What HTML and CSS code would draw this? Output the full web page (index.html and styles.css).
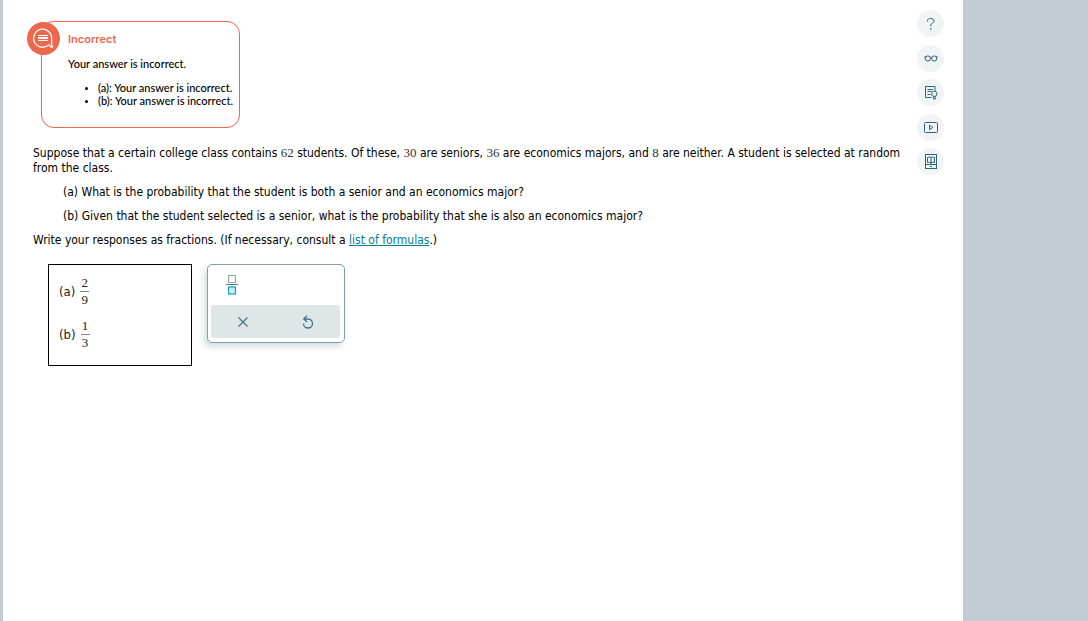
FILE: index.html
```html
<!DOCTYPE html>
<html lang="en">
<head>
<meta charset="utf-8">
<title>Probability question</title>
<link rel="stylesheet" href="styles.css">
</head>
<body>
<div class="page">
  <main class="content">
    <section class="feedback">
      <span class="feedback-badge">
        <svg width="33" height="33" viewBox="0 0 33 33" fill="none" stroke="#fff" stroke-width="1.3" stroke-linejoin="round" stroke-linecap="round"><path d="M22 22.600A9 9 0 1 1 24.600 17V22.500l1 2.500c-1.600.5-3-.7-3.600-2.400Z"/><path d="M11.500 13.500h9M11.500 15.500h9M11.500 16.500h9M11.500 18.500h9" stroke-width="1"/></svg>
      </span>
      <h1 class="feedback-title">Incorrect</h1>
      <p class="feedback-text">Your answer is incorrect.</p>
      <ul class="feedback-list">
        <li>(a): Your answer is incorrect.</li>
        <li>(b): Your answer is incorrect.</li>
      </ul>
    </section>
    <section class="question">
      <p>Suppose that a certain college class contains <span class="num">62</span> students. Of these, <span class="num">30</span> are seniors, <span class="num">36</span> are economics majors, and <span class="num">8</span> are neither. A student is selected at random from the class.</p>
      <p class="part">(a) What is the probability that the student is both a senior and an economics major?</p>
      <p class="part">(b) Given that the student selected is a senior, what is the probability that she is also an economics major?</p>
      <p>Write your responses as fractions. (If necessary, consult a <a href="#formulas">list of formulas</a>.)</p>
    </section>
    <section class="work">
      <div class="answers">
        <div class="answer"><span>(a)</span><span class="fraction"><span class="top">2</span><span>9</span></span></div>
        <div class="answer"><span>(b)</span><span class="fraction"><span class="top">1</span><span>3</span></span></div>
      </div>
      <div class="palette">
        <button class="palette-fraction" type="button" aria-label="Fraction">
          <svg width="14" height="22" viewBox="0 0 14 22" fill="none"><rect x="3.500" y="2.500" width="7" height="7" stroke="#8ba3ad"/><path d="M1 11.500h12" stroke="#4b7b8b"/><rect x="3.500" y="14" width="7" height="7" fill="#c5ecf2" stroke="#16a3b8" stroke-width="1.2"/></svg>
        </button>
        <div class="palette-actions">
          <button type="button" aria-label="Clear"><svg width="16" height="16" viewBox="0 0 16 16" fill="none" stroke="#40748a" stroke-width="1.2"><path d="M3.500 3.500l9 9M12.500 3.500l-9 9"/></svg></button>
          <button type="button" aria-label="Reset"><svg width="16" height="16" viewBox="0 0 16 16" fill="none" stroke="#40748a" stroke-width="1.3"><path d="M3.500 9.500A4.500 4.500 0 1 0 8 5H4M7 1.800 3.800 5 7 8"/></svg></button>
        </div>
      </div>
    </section>
  </main>
  <nav class="tools" aria-label="Resources">
    <button type="button" aria-label="Help"><svg width="27" height="27" viewBox="0 0 27 27"><path d="M10.500 11.500V10.800C10.500 9 11.800 8.500 13.800 8.500S17 9.500 17 11s-1 2-2 2.600-1.200 1-1.200 2.900"/><path d="M13.800 18v1.800"/></svg></button>
    <button type="button" aria-label="Reading view"><svg width="27" height="27" viewBox="0 0 27 27"><circle cx="10.800" cy="13.500" r="2.600"/><circle cx="17.200" cy="13.500" r="2.600"/><path d="M13.300 12.500q.7-.5 1.400 0M7.300 12h2M18.800 12h2"/></svg></button>
    <button type="button" aria-label="Worked example"><svg width="27" height="27" viewBox="0 0 27 27"><path d="M14.500 18.500H8.500v-11h9.500v4.500M10.500 10.500h5.500M10.500 12.500h4M10.500 15.500h3"/><circle cx="17.300" cy="14.800" r="2.700"/><path d="M16.500 17.500v2.500h1.800v-2.500"/></svg></button>
    <button type="button" aria-label="Video"><svg width="27" height="27" viewBox="0 0 27 27"><rect x="7.500" y="8.500" width="13" height="10" rx="1"/><path d="M12.500 11.200v4.600l3.300-2.300Z"/></svg></button>
    <button type="button" aria-label="Textbook"><svg width="27" height="27" viewBox="0 0 27 27"><rect x="8.500" y="6.500" width="11" height="14"/><path d="M10.500 9.500q2-1 3.500 0 1.500-1 3.500 0v5q-2-.5-3.500 0-1.500-.5-3.500 0ZM14 9.500v6.500M8.500 16.500h11M13 18.500h2"/></svg></button>
  </nav>
</div>
</body>
</html>
```
FILE: styles.css
```css
* { box-sizing: border-box; }
body {
  margin: 0;
  background: #c1cdd3;
  font: 12px/15px "DejaVu Sans Condensed", "DejaVu Sans", sans-serif;
  color: #000;
}
button { padding: 0; border: 0; background: none; cursor: pointer; }
svg { display: block; }
.page {
  display: flex;
  justify-content: space-between;
  min-height: 100vh;
  margin: 0 125px 0 3px;
  background: #fff;
}
.content { flex: 1; padding: 21px 0 21px 30px; }
.feedback {
  position: relative;
  width: max-content;
  margin-left: 8px;
  padding: 11px 6px 20px 26px;
  border: 1px solid #ec674c;
  border-radius: 13px;
  font: 500 11px/13px Lato, sans-serif;
}
.feedback-badge {
  position: absolute;
  top: 0;
  left: -15px;
  border-radius: 50%;
  background: #ec674c;
}
.feedback-title { margin: 0; font: 600 11px/13px Inter, sans-serif; color: #ec674c; }
.feedback-text { margin: 11px 0; }
.feedback-list { margin: 0; padding-left: 30px; }
.feedback-list li::marker { font-size: 9px; }
.question { margin-top: 18px; }
.question p { margin: 0 0 9px; }
.question .part { margin-left: 30px; }
.question a { color: #007f96; }
.num { font: 13px/14px "Liberation Serif", serif; color: #333; }
.work { display: flex; align-items: flex-start; gap: 15px; margin: 16px 0 0 15px; }
.answers {
  display: flex;
  flex-direction: column;
  gap: 10px;
  width: 144px;
  padding: 10px;
  min-height: 102px;
  border: 1px solid #000;
}
.answer { display: flex; align-items: center; gap: 5px; font-size: 13px; color: #222; }
.fraction {
  display: flex;
  flex-direction: column;
  width: 9px;
  text-align: center;
  font: 13px/16px "Liberation Serif", serif;
}
.fraction .top { border-bottom: 1px solid #888; }
.palette {
  width: 138px;
  padding: 8px 4px 4px 3px;
  border: 1px solid #7f9fab;
  border-radius: 5px;
  box-shadow: -3px 4px 6px #d5dfe3;
}
.palette-fraction { margin: 0 0 10px 14px; }
.palette-actions {
  display: flex;
  height: 33px;
  border-radius: 3px;
  background: #dfe6e8;
}
.palette-actions button { display: grid; flex: 1; place-items: center; }
.tools {
  display: flex;
  flex-direction: column;
  justify-content: space-between;
  height: 165px;
  margin: 10px 19px 0 9px;
}
.tools button { border-radius: 50%; background: #f0f4f5; }
.tools svg { fill: none; stroke: #2d6478; stroke-width: 1; }
```
